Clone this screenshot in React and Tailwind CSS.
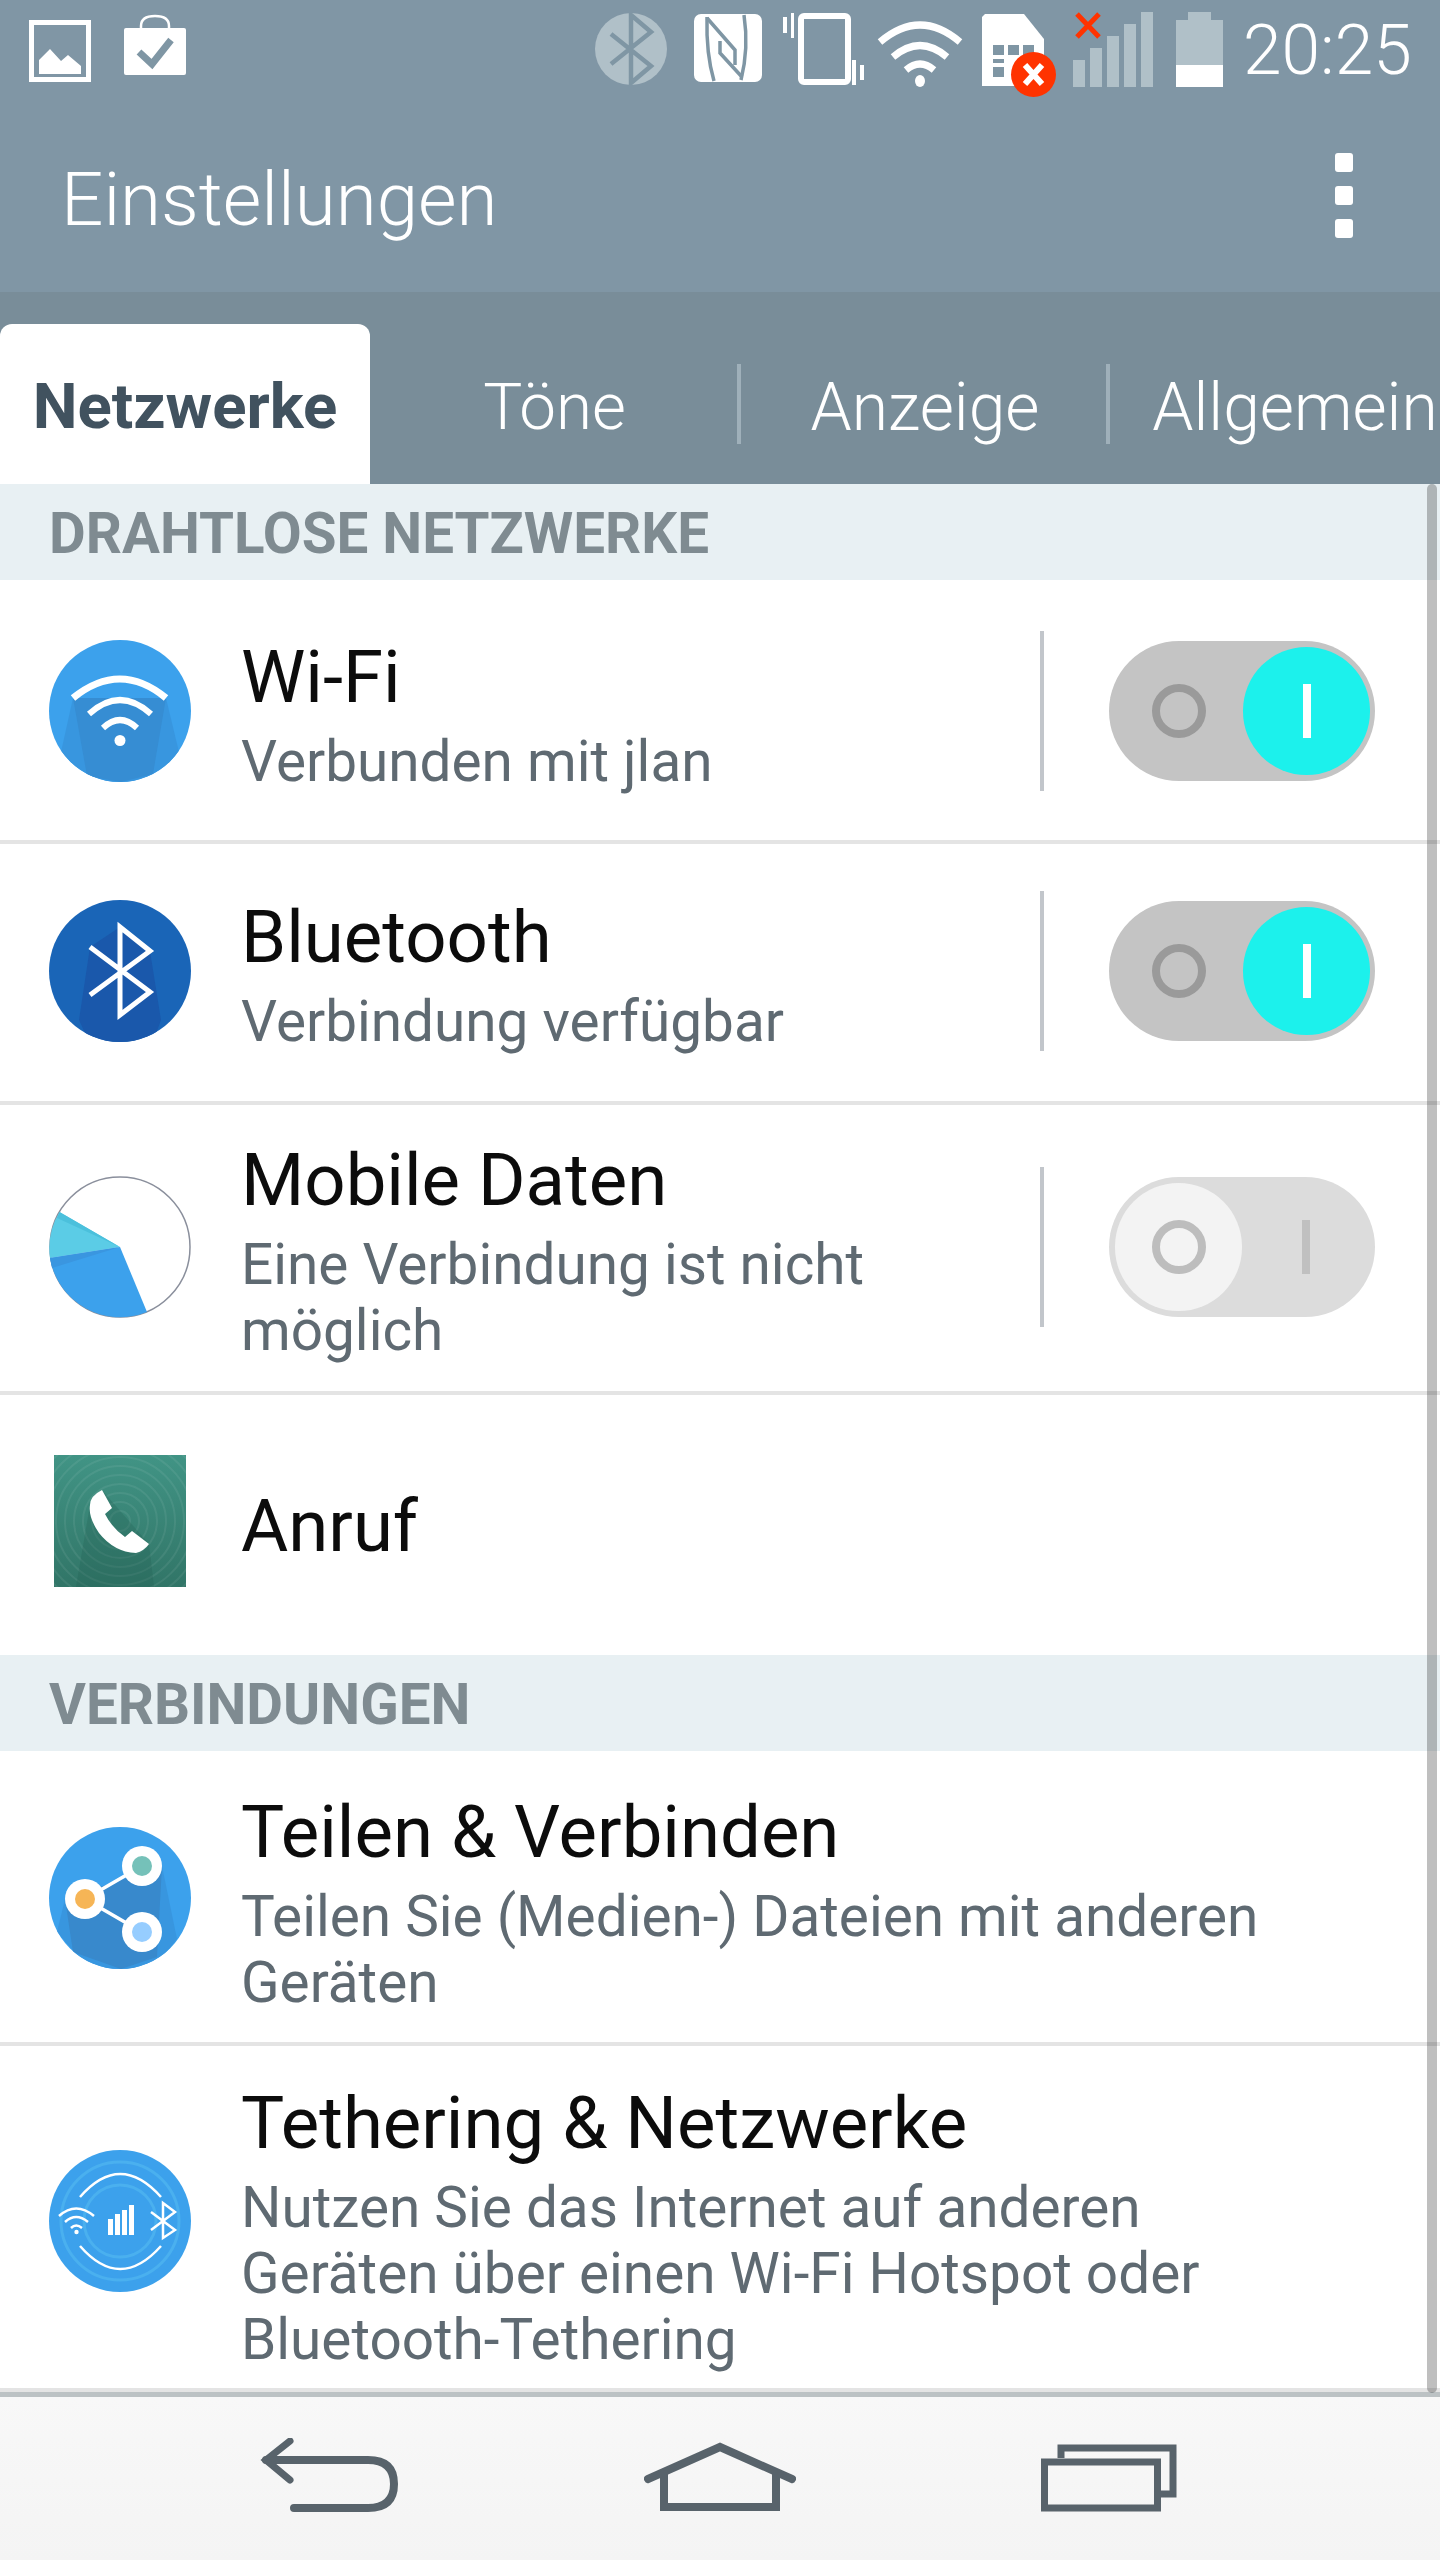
const ROBOTO = { fontFamily: 'Roboto, sans-serif' };

function ImageIcon() {
  return (
    <svg width="62" height="62" viewBox="0 0 62 62" className="ml-[29px] mt-[20px]">
      <rect x="2.5" y="2.5" width="57" height="57" fill="none" stroke="#fff" strokeWidth="5" />
      <path d="M10 54 V40 L21 29 L32 41 L39 35 L52 46 V54 Z" fill="#fff" />
    </svg>
  );
}

function BagIcon() {
  return (
    <svg width="62" height="62" viewBox="0 0 62 62" className="ml-[33px] mt-[14px]">
      <path d="M17 16 V12 Q17 2 31 2 Q45 2 45 12 V16" fill="none" stroke="#fff" strokeWidth="2.5" />
      <rect x="0" y="14" width="62" height="47" rx="2" fill="#fff" />
      <path d="M15 38 L28 50 L47 26" fill="none" stroke="#7f96a4" strokeWidth="7" />
    </svg>
  );
}

function StatusIcons() {
  return (
    <div className="ml-[409px] flex items-start">
      {/* bluetooth */}
      <svg width="72" height="72" viewBox="0 0 72 72" className="mt-[13px]">
        <circle cx="36" cy="36" r="36" fill="#b0c0c8" />
        <path d="M16 21 L56 53 L36 70 V2 L56 19 L16 51" fill="none" stroke="#7f96a4" strokeWidth="4.5" />
      </svg>
      {/* nfc */}
      <svg width="68" height="68" viewBox="0 0 68 68" className="ml-[27px] mt-[14px]">
        <rect x="0" y="0" width="68" height="68" rx="7" fill="#fff" />
        <g fill="none" stroke="#7f96a4" strokeWidth="3.5">
          <path d="M13 3 Q12 40 20 67" />
          <path d="M50 1 Q55 34 47 66" />
          <path d="M13 4 L41 36 V51" />
          <path d="M26 27 V39 L48 63" />
        </g>
      </svg>
      {/* vibrate */}
      <svg width="81" height="72" viewBox="0 0 81 72" className="ml-[21px] mt-[13px]">
        <rect x="18" y="3" width="47" height="66" rx="3" fill="none" stroke="#fff" strokeWidth="6" />
        <rect x="0" y="4" width="4" height="16" fill="#fff" />
        <rect x="8" y="0" width="3" height="25" fill="#fff" />
        <rect x="69" y="47" width="4" height="25" fill="#fff" />
        <rect x="77" y="52" width="4" height="15" fill="#fff" />
      </svg>
      {/* wifi */}
      <svg width="88" height="67" viewBox="0 0 88 67" className="ml-[12px] mt-[20px]">
        <path d="M4 22 Q44 -12 84 22" fill="none" stroke="#fff" strokeWidth="7" />
        <path d="M17 37 Q44 14 71 37" fill="none" stroke="#fff" strokeWidth="7" />
        <path d="M30 50 Q44 38 58 50" fill="none" stroke="#fff" strokeWidth="7" />
        <ellipse cx="44" cy="61" rx="5" ry="6" fill="#fff" />
      </svg>
      {/* sim with error badge */}
      <svg width="74" height="83" viewBox="0 0 74 83" className="ml-[18px] mt-[14px]">
        <path d="M3 0 H42 L62 25 V72 H0 V3 Z" fill="#fff" />
        <g fill="#7f96a4">
          <rect x="11" y="31" width="11" height="10" />
          <rect x="26" y="31" width="11" height="10" />
          <rect x="41" y="31" width="11" height="10" />
          <rect x="11" y="45" width="11" height="4" />
          <rect x="11" y="53" width="11" height="10" />
        </g>
        <circle cx="51.5" cy="60.5" r="22.5" fill="#ff3300" />
        <path d="M43 51 L60 70 M60 51 L43 70" stroke="#fff" strokeWidth="6" />
      </svg>
      {/* signal */}
      <svg width="80" height="75" viewBox="0 0 80 75" className="ml-[17px] mt-[12px]">
        <rect x="0" y="48" width="12" height="27" fill="#b0c0c8" />
        <rect x="17" y="36" width="12" height="39" fill="#b0c0c8" />
        <rect x="34" y="24" width="12" height="51" fill="#b0c0c8" />
        <rect x="51" y="12" width="12" height="63" fill="#b0c0c8" />
        <rect x="68" y="0" width="12" height="75" fill="#b0c0c8" />
        <path d="M4 2 L26 25 M26 2 L4 25" stroke="#ff3300" strokeWidth="5" />
      </svg>
      {/* battery */}
      <svg width="47" height="75" viewBox="0 0 47 75" className="ml-[23px] mt-[12px]">
        <rect x="12" y="0" width="23" height="9" fill="#b0c0c8" />
        <rect x="0" y="8" width="47" height="45" fill="#b0c0c8" />
        <rect x="0" y="53" width="47" height="22" fill="#fff" />
      </svg>
      <span className="ml-[20px] mt-[11px] text-[69.5px] leading-[80px] font-light text-white" style={ROBOTO}>20:25</span>
    </div>
  );
}

function Header() {
  return (
    <div className="h-[292px] bg-[#8096a5]">
      <div className="flex h-[110px]">
        <ImageIcon />
        <BagIcon />
        <StatusIcons />
      </div>
      <div className="flex items-start">
        <h1 className="ml-[61px] mt-[46px] text-[74.5px] leading-[88px] font-light text-white" style={ROBOTO}>Einstellungen</h1>
        <div className="ml-auto mr-[87px] mt-[43px] flex flex-col gap-[14px]">
          <div className="h-[19px] w-[18px] rounded-[3px] bg-white" />
          <div className="h-[19px] w-[18px] rounded-[3px] bg-white" />
          <div className="h-[19px] w-[18px] rounded-[3px] bg-white" />
        </div>
      </div>
    </div>
  );
}

function Tabs() {
  return (
    <div className="flex h-[192px] items-end overflow-hidden bg-[#798d99]" style={ROBOTO}>
      <div className="flex h-[160px] w-[370px] shrink-0 items-center justify-center rounded-t-[12px] bg-white pt-[6px] text-[63.5px] font-bold text-[#41525f]">Netzwerke</div>
      <div className="flex h-[160px] w-[367px] shrink-0 items-center justify-center pl-[2px] pt-[6px] text-[65.5px] font-light text-white">Töne</div>
      <div className="mb-[40px] h-[80px] w-[4px] shrink-0 bg-[#9fb0ba]" />
      <div className="flex h-[160px] w-[365px] shrink-0 items-center justify-center pl-[3px] pt-[6px] text-[66px] font-light text-white">Anzeige</div>
      <div className="mb-[40px] h-[80px] w-[4px] shrink-0 bg-[#9fb0ba]" />
      <div className="flex h-[160px] w-[370px] shrink-0 items-center justify-center pt-[6px] text-[66px] font-light text-white">Allgemein</div>
    </div>
  );
}

function SectionHeader({ children }) {
  return (
    <div className="flex h-[96px] items-center bg-[#e8f0f3] pl-[49px] pt-[5px] text-[56.5px] font-bold text-[#7f8b91]" style={ROBOTO}>
      {children}
    </div>
  );
}

function Toggle({ on }) {
  if (on) {
    return (
      <div className="flex h-[140px] w-[266px] items-center rounded-full bg-[#c4c4c4]">
        <div className="ml-[43px] h-[54px] w-[54px] rounded-full border-[8px] border-[#9a9a9a]" />
        <div className="ml-auto mr-[5px] flex h-[128px] w-[127px] items-center justify-center rounded-full bg-[#1cf1ec]">
          <div className="h-[54px] w-[8px] bg-white" />
        </div>
      </div>
    );
  }
  return (
    <div className="flex h-[140px] w-[266px] items-center rounded-full bg-[#dcdcdc]">
      <div className="ml-[6px] flex h-[128px] w-[127px] items-center justify-center rounded-full bg-[#f3f3f3]">
        <div className="h-[54px] w-[54px] rounded-full border-[8px] border-[#bdbdbd]" />
      </div>
      <div className="ml-[60px] h-[54px] w-[8px] bg-[#c0c0c0]" />
    </div>
  );
}

function WifiBadge() {
  return (
    <svg width="142" height="142" viewBox="0 0 142 142">
      <defs><clipPath id="wifiClip"><circle cx="71" cy="71" r="71" /></clipPath></defs>
      <circle cx="71" cy="71" r="71" fill="#3ca1ec" />
      <g clipPath="url(#wifiClip)">
        <path d="M24 58 L12 112 L40 142 H104 L130 112 L117 58 Z" fill="#3896df" />
        <path d="M24 58 L38 136 L72 142 L104 134 L117 58 Z" fill="#368dd3" />
      </g>
      <g fill="none" stroke="#fff">
        <path d="M24 58 Q71 20 117 58" strokeWidth="7" />
        <path d="M40 74 Q71 46 102 74" strokeWidth="6" />
        <path d="M54 88 Q71 72 88 88" strokeWidth="6" />
      </g>
      <circle cx="71" cy="100.5" r="5.5" fill="#fff" />
    </svg>
  );
}

function BluetoothBadge() {
  return (
    <svg width="142" height="142" viewBox="0 0 142 142">
      <defs><clipPath id="btClip"><circle cx="71" cy="71" r="71" /></clipPath></defs>
      <circle cx="71" cy="71" r="71" fill="#1a65b7" />
      <g clipPath="url(#btClip)">
        <path d="M41 47 L30 120 L40 142 H104 L112 120 L101 51 L71 27 Z" fill="#1a58ab" />
      </g>
      <path d="M41 47 L101 92 L71 115 V27 L101 51 L41 95" fill="none" stroke="#fff" strokeWidth="5" />
    </svg>
  );
}

function PieBadge() {
  return (
    <svg width="142" height="142" viewBox="0 0 142 142">
      <circle cx="71" cy="71" r="70" fill="#fff" stroke="#8a8f9c" strokeWidth="1.5" />
      <path d="M71 71 L10.5 36 A70 70 0 0 0 1 82 Z" fill="#5bcce6" />
      <path d="M71 71 L10.5 36 L8 42 Z" fill="#4bc0dc" />
      <path d="M71 71 L1 82 A71 71 0 0 0 98 136 Z" fill="#3ca1ec" />
      <path d="M71 71 L1 82 L3 92 Z" fill="#3a96e0" />
    </svg>
  );
}

function CallBadge() {
  const rings = [10, 19, 28, 37, 46, 55, 64, 73, 82, 91];
  return (
    <svg width="132" height="132" viewBox="0 0 132 132">
      <defs>
        <linearGradient id="callBg" x1="0" y1="0" x2="0" y2="1">
          <stop offset="0" stopColor="#419485" />
          <stop offset="1" stopColor="#317567" />
        </linearGradient>
        <clipPath id="callClip"><rect width="132" height="132" /></clipPath>
      </defs>
      <rect width="132" height="132" fill="url(#callBg)" />
      <g clipPath="url(#callClip)">
        {rings.map((r) => (
          <circle key={r} cx="66" cy="66" r={r} fill="none" stroke="#fff" strokeOpacity="0.07" strokeWidth="2" />
        ))}
        <path d="M36 50 L22 132 H100 L95 89 L48 35 Z" fill="#1f5b50" fillOpacity="0.25" />
      </g>
      <path d="M48 35 L58 53 L51 59 Q58 73 71 82 L78 76 L95 89 Q90 96 82 98 Q60 97 45 78 Q34 62 36 50 Q36 41 48 35 Z" fill="#fff" />
    </svg>
  );
}

function ShareBadge() {
  return (
    <svg width="142" height="142" viewBox="0 0 142 142">
      <defs><clipPath id="shareClip"><circle cx="71" cy="71" r="71" /></clipPath></defs>
      <circle cx="71" cy="71" r="71" fill="#3ca1ec" />
      <g clipPath="url(#shareClip)">
        <path d="M16 72 L8 105 L40 142 H104 L128 112 L113 39 Z" fill="#3896df" />
        <path d="M16 72 L24 125 L72 142 L108 130 L113 39 Z" fill="#3889cc" />
      </g>
      <path d="M36 72 L93 39 M36 72 L93 105" stroke="#fff" strokeWidth="3.5" />
      <circle cx="36" cy="72" r="20" fill="#fff" />
      <circle cx="36" cy="72" r="10" fill="#f6b556" />
      <circle cx="93" cy="39" r="20" fill="#fff" />
      <circle cx="93" cy="39" r="10" fill="#75c1b9" />
      <circle cx="93" cy="105" r="20" fill="#fff" />
      <circle cx="93" cy="105" r="10" fill="#96cdff" />
    </svg>
  );
}

function TetherBadge() {
  return (
    <svg width="142" height="142" viewBox="0 0 142 142">
      <circle cx="71" cy="71" r="71" fill="#3ca1ec" />
      <circle cx="71" cy="71" r="59" fill="none" stroke="#4ab0ef" strokeWidth="3" />
      <circle cx="71" cy="71" r="36" fill="none" stroke="#4ab0ef" strokeWidth="3" />
      <g fill="none" stroke="#fff" strokeWidth="2.5">
        <path d="M31 47 Q71 1 112 47" />
        <path d="M31 96 Q71 142 112 96" />
        <path d="M10 66 Q27 51 45 66" />
        <path d="M16 72 Q27 62 39 72" />
        <path d="M22 78 Q27 73 33 78" />
        <path d="M102 62 L126 80 L114 88 V53 L126 62 L102 80" />
      </g>
      <circle cx="27.5" cy="82" r="2.2" fill="#fff" />
      <rect x="59" y="69" width="5" height="16" fill="#fff" />
      <rect x="66" y="64" width="5" height="21" fill="#fff" />
      <rect x="73" y="60" width="5" height="25" fill="#fff" />
      <rect x="80" y="55" width="5" height="30" fill="#fff" />
    </svg>
  );
}

function Row({ className, sideClass, textClass, icon, title, lines, toggle }) {
  return (
    <div className={`flex items-center border-b-4 border-[#e4e4e4] pl-[49px] ${className}`}>
      <div className={`flex w-[142px] shrink-0 justify-center ${sideClass}`}>{icon}</div>
      <div className={`ml-[50px] flex-1 ${textClass}`} style={ROBOTO}>
        <div className="mt-[2px] text-[72.5px] leading-[90px] text-[#0c0c0c]">{title}</div>
        <div className="mt-[6px] text-[56.7px] leading-[66px] text-[#5f6a72]">
          {lines.map((line) => (
            <div key={line}>{line}</div>
          ))}
        </div>
      </div>
      {toggle !== undefined && (
        <div className={`mr-[65px] flex items-center ${sideClass}`}>
          <div className="mr-[65px] h-[160px] w-[4px] bg-[#c2c6cb]" />
          <Toggle on={toggle} />
        </div>
      )}
    </div>
  );
}

function NavBar() {
  return (
    <div className="flex h-[168px] items-start border-t-[5px] border-[#bcc2c4] bg-gradient-to-b from-[#f8f8f8] to-[#f4f4f4]">
      <svg width="140" height="76" viewBox="0 0 140 76" className="ml-[260px] mt-[41px]">
        <path d="M30 3 L6 22 L30 42" fill="none" stroke="#58636b" strokeWidth="7" strokeLinecap="round" />
        <path d="M6 22 H108 Q134 22 134 46 Q134 70 108 70 H34" fill="none" stroke="#58636b" strokeWidth="8" strokeLinecap="round" />
      </svg>
      <svg width="152" height="72" viewBox="0 0 152 72" className="ml-[244px] mt-[45px]">
        <path d="M4 37 L76 5 L148 37" fill="none" stroke="#58636b" strokeWidth="8" strokeLinecap="round" />
        <path d="M20 31 V65 H132 V31" fill="none" stroke="#58636b" strokeWidth="8" />
      </svg>
      <svg width="136" height="68" viewBox="0 0 136 68" className="ml-[245px] mt-[47px]">
        <path d="M20 14 V4 H132 V50 H120" fill="none" stroke="#58636b" strokeWidth="7" />
        <rect x="3.5" y="18" width="113" height="46" fill="none" stroke="#58636b" strokeWidth="7" />
      </svg>
    </div>
  );
}

export default function App() {
  return (
    <div className="relative h-[2560px] w-[1440px] overflow-hidden bg-white">
      <Header />
      <Tabs />
      <SectionHeader>DRAHTLOSE NETZWERKE</SectionHeader>
      <Row className="h-[264px]" sideClass="mt-[2px]" textClass="mt-[6px]" icon={<WifiBadge />} title="Wi-Fi" lines={['Verbunden mit jlan']} toggle={true} />
      <Row className="h-[261px]" sideClass="mb-[3px]" icon={<BluetoothBadge />} title="Bluetooth" lines={['Verbindung verfügbar']} toggle={true} />
      <Row className="h-[290px]" sideClass="mb-[3px]" textClass="mt-[2px]" icon={<PieBadge />} title="Mobile Daten" lines={['Eine Verbindung ist nicht', 'möglich']} toggle={false} />
      <div className="flex h-[260px] items-center pl-[49px]">
        <div className="mb-[8px] flex w-[142px] shrink-0 justify-center"><CallBadge /></div>
        <div className="ml-[50px] mt-[3px] text-[72.5px] leading-[90px] text-[#0c0c0c]" style={ROBOTO}>Anruf</div>
      </div>
      <SectionHeader>VERBINDUNGEN</SectionHeader>
      <Row className="h-[295px]" sideClass="mt-[3px]" textClass="mt-[8px]" icon={<ShareBadge />} title="Teilen & Verbinden" lines={['Teilen Sie (Medien-) Dateien mit anderen', 'Geräten']} />
      <Row className="h-[346px] border-b-0" sideClass="mt-[7px]" textClass="mt-[15px]" icon={<TetherBadge />} title="Tethering & Netzwerke" lines={['Nutzen Sie das Internet auf anderen', 'Geräten über einen Wi-Fi Hotspot oder', 'Bluetooth-Tethering']} />
      <NavBar />
      {/* overlay scrollbar */}
      <div className="absolute left-[1427px] top-[484px] h-[1909px] w-[10px] rounded-full bg-black/25" />
    </div>
  );
}
